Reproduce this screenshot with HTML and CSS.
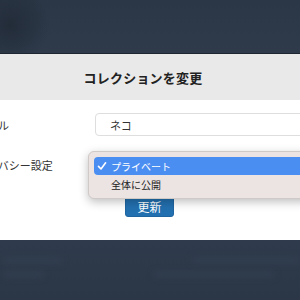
FILE: index.html
```html
<!DOCTYPE html>
<html lang="ja">
  <head>
    <meta charset="UTF-8" />
    <title>コレクションを変更</title>
    <link rel="stylesheet" href="styles.css">
  </head>
  <body>
    <div class="backdrop backdrop-top"></div>
    <div class="modal">
      <div class="modal-header">
        <h1 class="modal-title">コレクションを変更</h1>
      </div>
      <div class="modal-body">
        <div class="form-row">
          <label class="label" for="title">タイトル</label>
          <input class="text-input" id="title" type="text" value="ネコ" />
        </div>
        <div class="form-row">
          <span class="label">プライバシー設定</span>
          <div class="select">
            <div class="select-box"></div>
            <ul class="menu">
              <li class="menu-item is-selected">
                <svg class="check" width="10" height="10" viewBox="0 0 10 10">
                  <path d="M1.5 5.4 L4 8 L8.6 1.8" fill="none" stroke="#fff" stroke-width="1.6" stroke-linecap="round" stroke-linejoin="round"/>
                </svg>
                プライベート
              </li>
              <li class="menu-item">全体に公開</li>
            </ul>
          </div>
        </div>
      </div>
      <div class="modal-footer">
        <button class="btn btn-primary" type="button">更新</button>
      </div>
    </div>
    <div class="backdrop backdrop-bottom">
      <div class="ghost-line">
        <span class="ghost"></span><span class="ghost ghost-wide"></span>
      </div>
      <div class="ghost-line">
        <span class="ghost ghost-short"></span><span class="ghost ghost-mid"></span>
      </div>
    </div>
  </body>
</html>
```

FILE: styles.css
```css
* {
  box-sizing: border-box;
  margin: 0;
  padding: 0;
}

body {
  background: #2d3949;
  color: #222;
  font-family: 'Noto Sans CJK JP', 'Noto Sans', sans-serif;
  height: 300px;
  overflow: hidden;
}

.backdrop {
  background: #2d3949;
}

.backdrop-top {
  height: 53px;
  background:
    radial-gradient(circle at 10px 25px, #222c39 0, rgba(34, 44, 57, 0) 40px),
    linear-gradient(#2b3646, #2f3b4b);
}

.backdrop-bottom {
  height: 60px;
  padding: 18px 0 0 4px;
  background: linear-gradient(#2f3b4c, #2b3646);
}

.ghost-line {
  display: flex;
  margin-bottom: 9px;
}

.ghost {
  display: block;
  width: 70px;
  height: 5px;
  background: #334051;
  filter: blur(3px);
}

.ghost-wide {
  width: 130px;
  margin-left: 130px;
}

.ghost-short {
  width: 40px;
}

.ghost-mid {
  width: 120px;
  margin-left: 110px;
}

.modal {
  background: #fff;
  border-top: 1px solid #1e2631;
  margin-left: -50px;
  width: 386px;
  height: 187px;
}

.modal-header {
  background: #e9e9e9;
  height: 46px;
  display: flex;
  align-items: center;
  justify-content: center;
}

.modal-title {
  font-size: 13px;
  font-weight: bold;
  color: #222;
  letter-spacing: 0.2px;
}

.modal-body {
  padding: 13px 0 0 15px;
  display: flex;
  flex-direction: column;
  gap: 17px;
}

.form-row {
  display: grid;
  grid-template-columns: 130px 1fr;
  align-items: center;
  height: 23px;
}

.label {
  font-size: 11px;
  color: #333;
}

.text-input {
  height: 23px;
  border: 1px solid #dedede;
  border-radius: 4px;
  padding: 0 14px;
  font-family: inherit;
  font-size: 11px;
  color: #333;
  background: #fff;
  outline: none;
}

.select {
  position: relative;
  height: 23px;
}

.select-box {
  height: 23px;
  border: 1px solid #dedede;
  border-radius: 4px;
}

.menu {
  position: absolute;
  left: -7px;
  top: -2px;
  width: 260px;
  list-style: none;
  padding: 5px;
  background: #ebe4e2;
  border: 1px solid #cfc9c7;
  border-radius: 6px;
  box-shadow: 0 3px 10px rgba(0, 0, 0, 0.25);
}

.menu-item {
  display: flex;
  align-items: center;
  height: 18px;
  padding-left: 17px;
  font-size: 10px;
  color: #222;
  border-radius: 4px;
}

.menu-item.is-selected {
  background: #4b8ef2;
  color: #fff;
  padding-left: 3px;
}

.check {
  margin-right: 4px;
}

.modal-footer {
  padding: 17px 0 0 175px;
}

.btn {
  cursor: pointer;
  display: inline-flex;
  align-items: center;
  justify-content: center;
  font-family: inherit;
  font-size: 12px;
  height: 21px;
  width: 49px;
  border-radius: 3px;
}

.btn-primary {
  background: #2370b0;
  border: 1px solid #1e64a0;
  color: #fff;
}
```
